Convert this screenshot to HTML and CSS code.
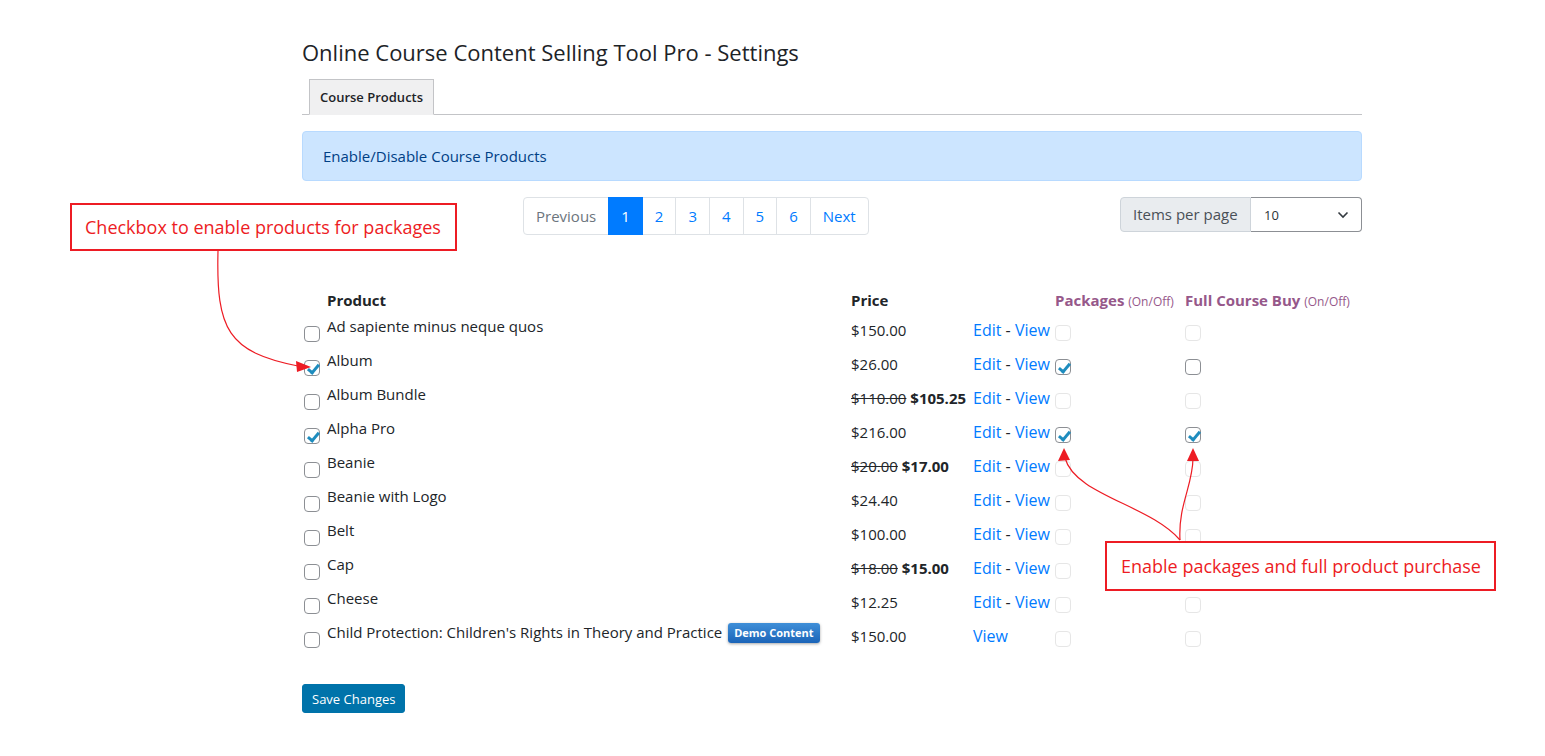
FILE: index.html
```html
<!DOCTYPE html>
<html lang="en">
<head>
<meta charset="utf-8">
<title>Online Course Content Selling Tool Pro - Settings</title>
<link rel="stylesheet" href="styles.css">
</head>
<body>
<div class="wrap">
  <h1 class="page-title">Online Course Content Selling Tool Pro - Settings</h1>
  <nav class="tabs">
    <a class="tab active">Course Products</a>
  </nav>
  <div class="alert">Enable/Disable Course Products</div>

  <div class="toolbar">
    <ul class="pagination">
      <li class="page disabled">Previous</li>
      <li class="page active">1</li>
      <li class="page">2</li>
      <li class="page">3</li>
      <li class="page">4</li>
      <li class="page">5</li>
      <li class="page">6</li>
      <li class="page">Next</li>
    </ul>
    <div class="input-group">
      <span class="ig-label">Items per page</span>
      <span class="ig-select">10
        <svg class="chev" width="12" height="8" viewBox="0 0 12 8"><path d="M1.5 1.5 L6 6 L10.5 1.5" fill="none" stroke="#343a40" stroke-width="1.6"/></svg>
      </span>
    </div>
  </div>

  <div class="ptable">
    <div class="th"></div>
    <div class="th">Product</div>
    <div class="th">Price</div>
    <div class="th"></div>
    <div class="th purple">Packages <small>(On/Off)</small></div>
    <div class="th purple">Full Course Buy <small>(On/Off)</small></div>

    <div class="c-cb"><span class="cb"></span></div>
    <div class="c-name">Ad sapiente minus neque quos</div>
    <div class="c-price">$150.00</div>
    <div class="c-links"><a>Edit</a> - <a>View</a></div>
    <div class="c-opt"><span class="cb dis"></span></div>
    <div class="c-opt"><span class="cb dis"></span></div>

    <div class="c-cb"><span class="cb on"></span></div>
    <div class="c-name">Album</div>
    <div class="c-price">$26.00</div>
    <div class="c-links"><a>Edit</a> - <a>View</a></div>
    <div class="c-opt"><span class="cb on"></span></div>
    <div class="c-opt"><span class="cb"></span></div>

    <div class="c-cb"><span class="cb"></span></div>
    <div class="c-name">Album Bundle</div>
    <div class="c-price"><del>$110.00</del> <b>$105.25</b></div>
    <div class="c-links"><a>Edit</a> - <a>View</a></div>
    <div class="c-opt"><span class="cb dis"></span></div>
    <div class="c-opt"><span class="cb dis"></span></div>

    <div class="c-cb"><span class="cb on"></span></div>
    <div class="c-name">Alpha Pro</div>
    <div class="c-price">$216.00</div>
    <div class="c-links"><a>Edit</a> - <a>View</a></div>
    <div class="c-opt"><span class="cb on"></span></div>
    <div class="c-opt"><span class="cb on"></span></div>

    <div class="c-cb"><span class="cb"></span></div>
    <div class="c-name">Beanie</div>
    <div class="c-price"><del>$20.00</del> <b>$17.00</b></div>
    <div class="c-links"><a>Edit</a> - <a>View</a></div>
    <div class="c-opt"><span class="cb dis"></span></div>
    <div class="c-opt"><span class="cb dis"></span></div>

    <div class="c-cb"><span class="cb"></span></div>
    <div class="c-name">Beanie with Logo</div>
    <div class="c-price">$24.40</div>
    <div class="c-links"><a>Edit</a> - <a>View</a></div>
    <div class="c-opt"><span class="cb dis"></span></div>
    <div class="c-opt"><span class="cb dis"></span></div>

    <div class="c-cb"><span class="cb"></span></div>
    <div class="c-name">Belt</div>
    <div class="c-price">$100.00</div>
    <div class="c-links"><a>Edit</a> - <a>View</a></div>
    <div class="c-opt"><span class="cb dis"></span></div>
    <div class="c-opt"><span class="cb dis"></span></div>

    <div class="c-cb"><span class="cb"></span></div>
    <div class="c-name">Cap</div>
    <div class="c-price"><del>$18.00</del> <b>$15.00</b></div>
    <div class="c-links"><a>Edit</a> - <a>View</a></div>
    <div class="c-opt"><span class="cb dis"></span></div>
    <div class="c-opt"><span class="cb dis"></span></div>

    <div class="c-cb"><span class="cb"></span></div>
    <div class="c-name">Cheese</div>
    <div class="c-price">$12.25</div>
    <div class="c-links"><a>Edit</a> - <a>View</a></div>
    <div class="c-opt"><span class="cb dis"></span></div>
    <div class="c-opt"><span class="cb dis"></span></div>

    <div class="c-cb"><span class="cb"></span></div>
    <div class="c-name">Child Protection: Children's Rights in Theory and Practice <span class="badge">Demo Content</span></div>
    <div class="c-price">$150.00</div>
    <div class="c-links"><a>View</a></div>
    <div class="c-opt"><span class="cb dis"></span></div>
    <div class="c-opt"><span class="cb dis"></span></div>
  </div>

  <button class="btn-primary">Save Changes</button>
</div>

<div class="note note-left">Checkbox to enable products for packages</div>
<div class="note note-right">Enable packages and full product purchase</div>
<svg class="arrows" width="1545" height="756" viewBox="0 0 1545 756">
  <g fill="none" stroke="#ed1c24" stroke-width="1.2">
    <path d="M218 251 C 216 330, 228 352, 298 366"/>
    <path d="M1180 540 C 1150 505, 1075 495, 1065 458"/>
    <path d="M1180 540 C 1178 505, 1193 485, 1193 458"/>
  </g>
  <g fill="#ed1c24">
    <polygon points="311,367 296,361 297,372"/>
    <polygon points="1064,448 1058,461 1070,460"/>
    <polygon points="1193,448 1187,461 1199,461"/>
  </g>
</svg>
</body>
</html>
```
FILE: styles.css
```css
* { box-sizing: border-box; }
body {
  margin: 0;
  background: #fff;
  color: #212529;
  font-family: "Open Sans", "Noto Sans", sans-serif;
  font-size: 16px;
}
.wrap {
  width: 1060px;
  margin-left: 302px;
  padding-top: 36px;
}
.page-title {
  margin: 0;
  font-size: 22px;
  font-weight: 400;
  line-height: 32px;
  color: #1d2327;
}
.tabs {
  margin-top: 11px;
  border-bottom: 1px solid #c3c4c7;
  padding-left: 7px;
  height: 36px;
}
.tab {
  display: inline-block;
  height: 36px;
  padding: 0 10px;
  line-height: 34px;
  font-size: 13px;
  font-weight: 600;
  color: #1d2327;
  background: #f0f0f1;
  border: 1px solid #c3c4c7;
  border-bottom-color: #f0f0f1;
}
.alert {
  margin-top: 16px;
  height: 50px;
  padding: 0 20px;
  line-height: 48px;
  background: #cce5ff;
  border: 1px solid #b8daff;
  border-radius: 4px;
  color: #004085;
  font-size: 15px;
}
.toolbar {
  display: flex;
  align-items: flex-start;
  margin-top: 16px;
}
.pagination {
  display: flex;
  list-style: none;
  margin: 0 0 0 221px;
  padding: 0;
}
.page {
  height: 38px;
  line-height: 36px;
  padding: 0 12px;
  border: 1px solid #dee2e6;
  margin-left: -1px;
  color: #007bff;
  font-size: 15px;
  background: #fff;
}
.page:first-child { border-radius: 4px 0 0 4px; margin-left: 0; }
.page:last-child { border-radius: 0 4px 4px 0; }
.page.disabled { color: #6c757d; }
.page.active { background: #007bff; border-color: #007bff; color: #fff; position: relative; }
.input-group {
  display: flex;
  margin-left: auto;
  height: 35px;
}
.ig-label {
  padding: 0 12px;
  line-height: 33px;
  background: #e9ecef;
  border: 1px solid #ced4da;
  border-radius: 4px 0 0 4px;
  color: #495057;
  font-size: 15px;
  width: 131px;
}
.ig-select {
  display: flex;
  align-items: center;
  width: 111px;
  padding: 0 12px 0 13px;
  border: 1px solid #8c8f94;
  border-left: none;
  border-radius: 0 4px 4px 0;
  font-size: 13px;
  color: #2c3338;
}
.chev { margin-left: auto; }
.ptable {
  display: grid;
  grid-template-columns: 25px 524px 122px 82px 130px 177px;
  grid-template-rows: 28px;
  grid-auto-rows: 34px;
  margin-top: 51px;
}
.th {
  font-weight: 700;
  font-size: 15px;
  line-height: 28px;
  white-space: nowrap;
}
.th.purple { color: #96588a; }
.th small { font-size: 12px; font-weight: 400; }
.c-cb { padding-top: 12px; padding-left: 2px; }
.c-name { line-height: 24px; font-size: 15px; white-space: nowrap; }
.c-price, .c-links { line-height: 32px; font-size: 15px; white-space: nowrap; }
.c-links { font-size: 16px; }
.c-price del { font-weight: 400; }
.c-links a { color: #007bff; }
.c-opt { padding-top: 11px; }
.cb {
  display: inline-block;
  width: 16px;
  height: 16px;
  border: 1px solid #8c8f94;
  border-radius: 4px;
  background: #fff;
  position: relative;
  vertical-align: top;
}
.cb.dis { border-color: #e6e6e6; }
.cb.on::after {
  content: "";
  position: absolute;
  left: 5px;
  top: 1px;
  width: 4px;
  height: 9px;
  border-right: 3px solid #1e8cbe;
  border-bottom: 3px solid #1e8cbe;
  transform: rotate(40deg);
}
.badge {
  display: inline-block;
  vertical-align: top;
  margin-top: 3px;
  margin-left: 2px;
  padding: 0 6px;
  height: 20px;
  line-height: 20px;
  border-radius: 3px;
  background: linear-gradient(#3f8fd8, #1b64b8);
  color: #fff;
  font-size: 11px;
  font-weight: 700;
  box-shadow: 0 1px 3px rgba(0,0,0,.35);
}
.btn-primary {
  margin-top: 30px;
  height: 29px;
  padding: 0 9px;
  border: 1px solid #0073aa;
  border-radius: 3px;
  background: #0073aa;
  color: #fff;
  font-family: inherit;
  font-size: 13px;
}
.note {
  position: absolute;
  border: 2px solid #ed1c24;
  color: #ed1c24;
  font-size: 18px;
  background: #fff;
  padding-left: 13px;
  display: flex;
  align-items: center;
}
.note-left { left: 70px; top: 203px; width: 387px; height: 48px; }
.note-right { left: 1105px; top: 541px; width: 391px; height: 50px; padding-left: 14px; }
.arrows { position: absolute; left: 0; top: 0; pointer-events: none; }
```
